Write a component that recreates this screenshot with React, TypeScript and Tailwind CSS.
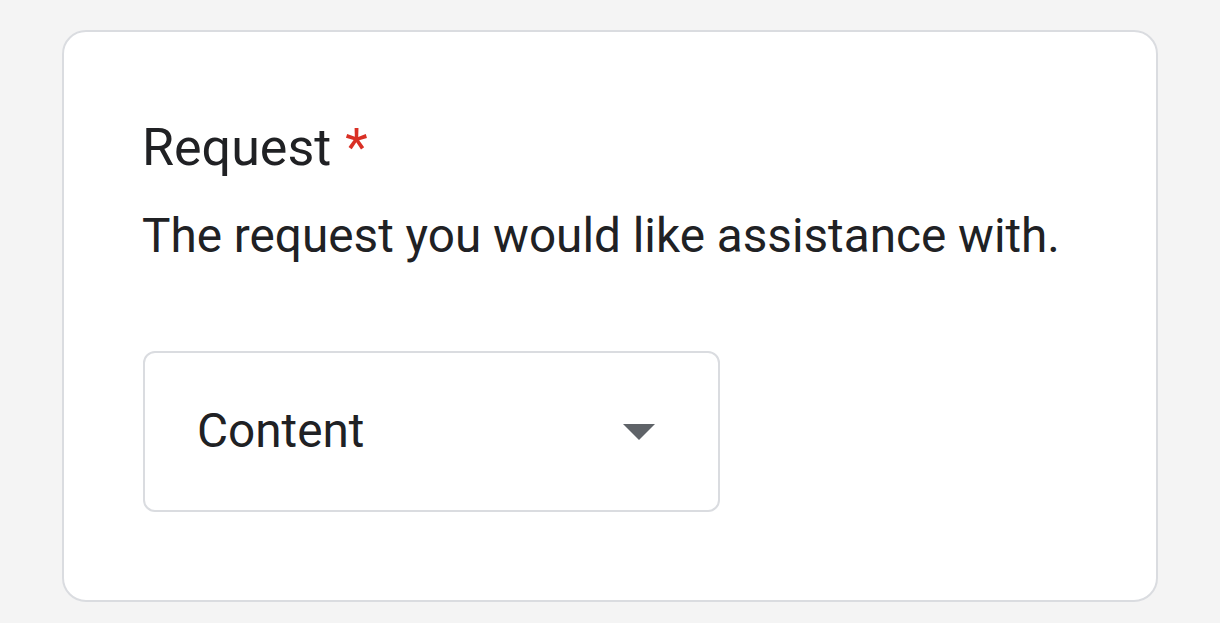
const App = () => {
  return (
    <div className="min-h-screen bg-[#f4f4f4] pt-[30px] pl-[62px] font-['Roboto',sans-serif] text-[#202124]">
      <div className="w-[1096px] h-[572px] rounded-[24px] border-2 border-[#dadce0] bg-white pt-[86px] pl-[78px]">
        <div className="flex items-center gap-[14px] text-[52px] leading-[60px]">
          <span>Request</span>
          <span className="text-[#d93025]">*</span>
        </div>

        <p className="mt-[28px] text-[47.7px] leading-[60px]">
          The request you would like assistance with.
        </p>

        <button
          type="button"
          className="ml-[1px] mt-[85px] flex h-[161px] w-[577px] items-center justify-between rounded-[12px] border-2 border-[#dadce0] bg-white pl-[52px] pr-[63px]"
        >
          <span className="text-[47.7px] text-[#202124]">Content</span>
          <svg width="32" height="16" viewBox="0 0 32 16" aria-hidden="true">
            <path d="M0 0 L32 0 L16 16 Z" fill="#5f6368" />
          </svg>
        </button>
      </div>
    </div>
  );
};

export default App;
